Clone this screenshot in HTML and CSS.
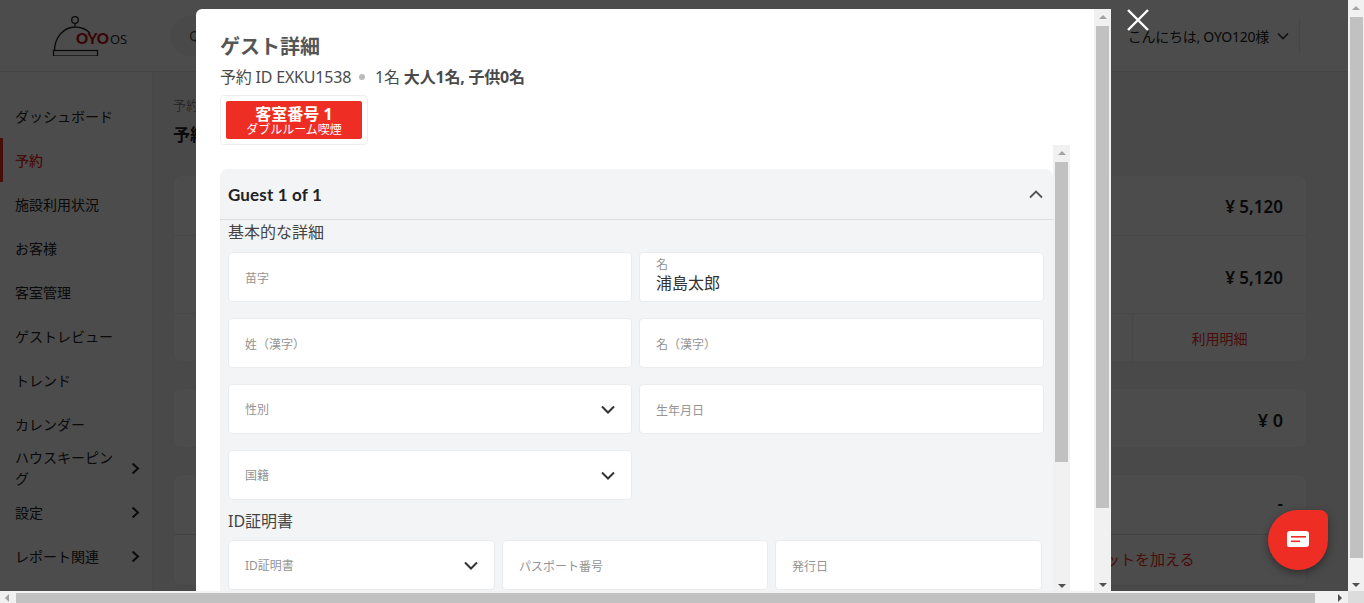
FILE: index.html
```html
<!DOCTYPE html>
<html lang="ja">
<head>
<meta charset="utf-8">
<title>ゲスト詳細</title>
<link rel="stylesheet" href="styles.css">
</head>
<body>
<div class="window">
  <div class="window-main">
    <div class="page">
      <header class="topbar">
        <div class="logo-wrap">
          <svg class="logo" width="80" height="44" viewBox="0 0 80 44">
            <circle cx="23" cy="8" r="3.3" fill="none" stroke="#222" stroke-width="1.3"/>
            <path d="M23 11.5V15M2.5 39C2.5 25 12 15 23 15C29 15 34 17 38 21" fill="none" stroke="#222" stroke-width="1.3"/>
            <rect x="1.5" y="38.5" width="44" height="5.5" fill="none" stroke="#222" stroke-width="1.3"/>
            <text x="24" y="32" class="logo-oyo">OYO</text>
            <text x="58" y="31.5" class="logo-os">OS</text>
          </svg>
        </div>
        <div class="search">Q</div>
        <div class="spacer"></div>
        <div class="user">こんにちは, OYO120様
          <svg width="12" height="8" viewBox="0 0 12 8"><path d="M1 1.5L6 6.5L11 1.5" fill="none" stroke="#333" stroke-width="1.6"/></svg>
        </div>
        <div class="top-divider"></div>
      </header>
      <div class="page-body">
        <nav class="sidebar">
          <div class="nav-item">ダッシュボード</div>
          <div class="nav-item active">予約</div>
          <div class="nav-item">施設利用状況</div>
          <div class="nav-item">お客様</div>
          <div class="nav-item">客室管理</div>
          <div class="nav-item">ゲストレビュー</div>
          <div class="nav-item">トレンド</div>
          <div class="nav-item">カレンダー</div>
          <div class="nav-item sub"><span>ハウスキーピング</span><svg class="nav-chev" width="9" height="13" viewBox="0 0 9 13"><path d="M1.5 1.5L7 6.5L1.5 11.5" fill="none" stroke="#222" stroke-width="2"/></svg></div>
          <div class="nav-item sub"><span>設定</span><svg class="nav-chev" width="9" height="13" viewBox="0 0 9 13"><path d="M1.5 1.5L7 6.5L1.5 11.5" fill="none" stroke="#222" stroke-width="2"/></svg></div>
          <div class="nav-item sub"><span>レポート関連</span><svg class="nav-chev" width="9" height="13" viewBox="0 0 9 13"><path d="M1.5 1.5L7 6.5L1.5 11.5" fill="none" stroke="#222" stroke-width="2"/></svg></div>
        </nav>
        <main class="content">
          <div class="crumb">予約</div>
          <div class="page-title">予約</div>
          <section class="card">
            <div class="card-row tall">¥ 5,120</div>
            <div class="card-row taller">¥ 5,120</div>
            <div class="card-links"><span></span><span class="link">利用明細</span></div>
          </section>
          <section class="card"><div class="card-row big">¥ 0</div></section>
          <section class="card">
            <div class="card-row dash">-</div>
            <div class="card-action">クレジットを加える</div>
          </section>
        </main>
      </div>

      <div class="overlay">
        <div class="modal">
          <div class="modal-body">
            <h1 class="modal-title">ゲスト詳細</h1>
            <p class="booking">予約 ID EXKU1538<i class="dot"></i>1名 <b>大人1名, 子供0名</b></p>
            <div class="room-box">
              <div class="room-tag"><b>客室番号 1</b><span>ダブルルーム喫煙</span></div>
            </div>
            <div class="guest-scroll">
              <div class="guest-inner">
                <div class="accordion">
                  <div class="acc-head">
                    <span>Guest 1 of 1</span>
                    <svg width="14" height="9" viewBox="0 0 14 9"><path d="M1 7.5L7 1.5L13 7.5" fill="none" stroke="#555" stroke-width="1.8"/></svg>
                  </div>
                  <div class="acc-body">
                    <div class="sec-label">基本的な詳細</div>
                    <div class="grid-two">
                      <div class="field"><span class="ph text-ph">苗字</span></div>
                      <div class="field filled"><span class="ph">名</span><span class="val">浦島太郎</span></div>
                      <div class="field"><span class="ph text-ph">姓（漢字）</span></div>
                      <div class="field"><span class="ph text-ph">名（漢字）</span></div>
                      <div class="field"><span class="ph">性別</span><svg class="sel" width="14" height="9" viewBox="0 0 14 9"><path d="M1 1.5L7 7.5L13 1.5" fill="none" stroke="#333" stroke-width="2"/></svg></div>
                      <div class="field"><span class="ph text-ph">生年月日</span></div>
                      <div class="field"><span class="ph">国籍</span><svg class="sel" width="14" height="9" viewBox="0 0 14 9"><path d="M1 1.5L7 7.5L13 1.5" fill="none" stroke="#333" stroke-width="2"/></svg></div>
                    </div>
                    <div class="sec-label id-label">ID証明書</div>
                    <div class="grid-three">
                      <div class="field"><span class="ph">ID証明書</span><svg class="sel" width="14" height="9" viewBox="0 0 14 9"><path d="M1 1.5L7 7.5L13 1.5" fill="none" stroke="#333" stroke-width="2"/></svg></div>
                      <div class="field"><span class="ph text-ph">パスポート番号</span></div>
                      <div class="field"><span class="ph text-ph">発行日</span></div>
                    </div>
                  </div>
                </div>
              </div>
              <div class="sb sb-inner">
                <i class="arrow up"></i>
                <div class="thumb inner-thumb"></div>
                <i class="arrow down"></i>
              </div>
            </div>
          </div>
          <div class="sb sb-modal">
            <i class="arrow up"></i>
            <div class="thumb modal-thumb"></div>
            <i class="arrow down"></i>
          </div>
        </div>
        <svg class="close" width="24" height="24" viewBox="0 0 24 24"><path d="M2 2L22 22M22 2L2 22" stroke="#fff" stroke-width="2.4" fill="none"/></svg>
        <div class="chat">
          <svg width="24" height="18" viewBox="0 0 24 18"><path d="M4 0H20A3 3 0 0 1 23 3V13A3 3 0 0 1 20 16H3A2 2 0 0 1 1 14V3A3 3 0 0 1 4 0Z" fill="#fff"/><rect x="5" y="5" width="15" height="1.6" fill="#ee2e24"/><rect x="5" y="9.5" width="9" height="1.6" fill="#ee2e24"/></svg>
        </div>
      </div>
    </div>
    <div class="sb sb-page">
      <i class="arrow up"></i>
      <div class="thumb page-thumb"></div>
      <i class="arrow down"></i>
    </div>
  </div>
  <div class="hbar">
    <i class="arrow left"></i>
    <div class="hthumb"></div>
    <i class="arrow right"></i>
    <div class="corner"></div>
  </div>
</div>
</body>
</html>
```

FILE: styles.css
```css
* { box-sizing: border-box; }
html, body { margin: 0; padding: 0; height: 100%; overflow: hidden; }
body { font-family: "Noto Sans", "Noto Sans CJK JP", sans-serif; color: #333; background: #fff; }

.window { width: 1364px; height: 603px; display: flex; flex-direction: column; overflow: hidden; }
.window-main { height: 591px; display: flex; flex: none; }
.page { position: relative; width: 1348px; height: 591px; background: #f4f5f6; overflow: hidden; }

/* scrollbars */
.sb { display: flex; flex-direction: column; align-items: center; background: #f1f1f1; flex: none; }
.thumb { background: #c1c1c1; width: 13px; }
.arrow { display: block; width: 0; height: 0; border-style: solid; border-color: transparent; flex: none; }
.arrow.up { border-width: 0 4px 4px; border-bottom-color: #a3a3a3; margin: 6px 0 7px; }
.arrow.down { border-width: 4px 4px 0; border-top-color: #505050; margin-top: auto; margin-bottom: 4px; }
.sb-page { width: 16px; }
.page-thumb { height: 541px; }
.sb-modal { width: 17px; }
.modal-thumb { height: 482px; }
.sb-inner { width: 17px; }
.inner-thumb { height: 300px; }

.hbar { height: 12px; flex: none; display: flex; align-items: center; background: #f1f1f1; }
.arrow.left { border-width: 4px 4px 4px 0; border-right-color: #a3a3a3; margin: 2px 5px 0 5px; }
.hthumb { width: 1299px; height: 10px; margin-top: 2px; margin-left: 2px; background: #c1c1c1; }
.arrow.right { border-width: 4px 0 4px 4px; border-left-color: #505050; margin: 2px 0 0 23px; }
.corner { width: 16px; height: 12px; margin-left: auto; background: #dcdcdc; }

/* background page */
.topbar { height: 72px; background: #fff; border-bottom: 1px solid #e8e8e8; display: flex; align-items: center; }
.logo-wrap { width: 170px; padding-left: 52px; flex: none; display: flex; }
.logo { display: block; margin-top: -3px; }
.logo-oyo { font: 900 15px "Lato", sans-serif; fill: #c00f0f; }
.logo-os { font: 400 13px "Open Sans", sans-serif; fill: #222; }
.search { width: 60px; height: 40px; padding-left: 19px; border-radius: 20px; background: #f4f5f6; color: #555; font-size: 14px; line-height: 40px; flex: none; }
.spacer { flex: 1; }
.user { font-size: 14px; color: #222; display: flex; align-items: center; gap: 8px; margin-right: 10px; white-space: nowrap; letter-spacing: -.25px; }
.top-divider { width: 1px; height: 36px; background: #e8e8e8; margin-right: 48px; }

.page-body { display: flex; height: 519px; }
.sidebar { width: 153px; flex: none; background: #fff; border-right: 1px solid #eee; padding-top: 22px; }
.nav-item { min-height: 44px; display: flex; align-items: center; padding-left: 15px; font-size: 14px; line-height: 21px; color: #222; }
.nav-item.active { color: #ee2e24; border-left: 3px solid #ee2e24; padding-left: 12px; font-weight: 500; }
.nav-item.sub { justify-content: space-between; padding-right: 12px; }
.nav-item.sub span { width: 105px; }
.nav-chev { flex: none; }

.content { flex: 1; padding: 23px 41px 0 20px; min-width: 0; }
.crumb { font-size: 13px; color: #888; line-height: 20px; }
.page-title { font-size: 17px; font-weight: 700; color: #222; line-height: 28px; margin: 6px 0 26px; }
.card { background: #fff; border-radius: 8px; margin-bottom: 26px; border: 1px solid #f0f0f0; }
.card-row { padding-right: 23px; text-align: right; font-size: 17px; font-weight: 600; color: #222; }
.card-row.tall { height: 60px; line-height: 62px; border-bottom: 1px solid #eee; }
.card-row.taller { height: 78px; line-height: 84px; border-bottom: 1px solid #eee; }
.card-links { display: grid; grid-template-columns: 1fr 174px; height: 47px; }
.link { border-left: 1px solid #eee; color: #ee2e24; font-size: 14px; text-align: center; line-height: 50px; }
.card-row.big { height: 58px; line-height: 62px; font-size: 18px; }
.card-row.dash { height: 60px; line-height: 58px; border-bottom: 1px solid #ddd; }
.card-action { height: 50px; line-height: 48px; color: #ee2e24; font-size: 15px; padding-left: 886px; white-space: nowrap; }

/* overlay + modal */
.overlay { position: absolute; inset: 0; background: rgba(0, 0, 0, .7); }
.modal { position: absolute; left: 196px; top: 9px; width: 915px; height: 582px; background: #fff; border-radius: 6px 0 0 0; display: flex; overflow: hidden; }
.modal-body { flex: 1; min-width: 0; padding: 24px 24px 0 24px; display: flex; flex-direction: column; }
.modal-title { margin: 0; font-size: 20px; line-height: 27px; font-weight: 700; color: #555; }
.booking { margin: 6px 0 0; font-size: 16px; line-height: 22px; color: #4a4a4a; display: flex; align-items: center; white-space: pre; letter-spacing: -.2px; }
.booking b { font-weight: 700; font-size: 16px; }
.dot { width: 6px; height: 6px; border-radius: 50%; background: #bbb; margin: 0 10px 0 8px; }
.room-box { width: 148px; height: 50px; margin-top: 7px; padding: 5px; border: 1px solid #eee; border-radius: 4px; flex: none; }
.room-tag { height: 38px; padding-top: 4px; background: #ee2e24; color: #fff; border-radius: 2px; display: flex; flex-direction: column; align-items: center; }
.room-tag b { font-size: 16px; line-height: 18px; font-weight: 700; }
.room-tag span { font-size: 12px; line-height: 13px; }

.guest-scroll { display: flex; height: 447px; flex: none; width: 850px; overflow: hidden; }
.guest-inner { flex: 1; min-width: 0; padding-top: 24px; overflow: hidden; }
.accordion { background: #f3f4f6; border-radius: 8px 8px 0 0; min-height: 500px; }
.acc-head { height: 51px; display: flex; align-items: center; justify-content: space-between; padding: 0 10px 0 8px; border-bottom: 1px solid #ddd; font-family: "Lato", "Noto Sans", sans-serif; font-size: 17px; font-weight: 700; color: #222; letter-spacing: .15px; }
.acc-body { padding: 2px 10px 0 8px; }
.sec-label { font-size: 16px; line-height: 20px; color: #444; }
.grid-two { display: grid; grid-template-columns: 404px 405px; column-gap: 7px; row-gap: 16px; margin-top: 10px; }
.grid-three { display: grid; grid-template-columns: 267px 266px 267px; column-gap: 7px; margin-top: 7px; }
.id-label { line-height: 24px; margin-top: 9px; }
.field { height: 50px; background: #fff; border: 1px solid #eaebec; border-radius: 4px; padding: 0 16px; display: flex; align-items: center; justify-content: space-between; }
.ph { font-size: 12px; color: #949494; line-height: 16px; margin-top: 2px; }
.text-ph { margin-top: 4px; }
.field.filled { flex-direction: column; align-items: flex-start; justify-content: flex-start; padding-top: 5px; }
.field.filled .ph { line-height: 13px; margin-top: 0; }
.val { font-size: 16px; line-height: 20px; margin-top: 2px; color: #333; }
.sel { flex: none; }

.close { position: absolute; left: 1126px; top: 8px; }
.chat { position: absolute; left: 1268px; top: 510px; width: 60px; height: 60px; background: #ee2e24; border-radius: 50% 8px 50% 50%; box-shadow: 0 3px 8px rgba(0, 0, 0, .4); display: flex; align-items: center; justify-content: center; }
```
